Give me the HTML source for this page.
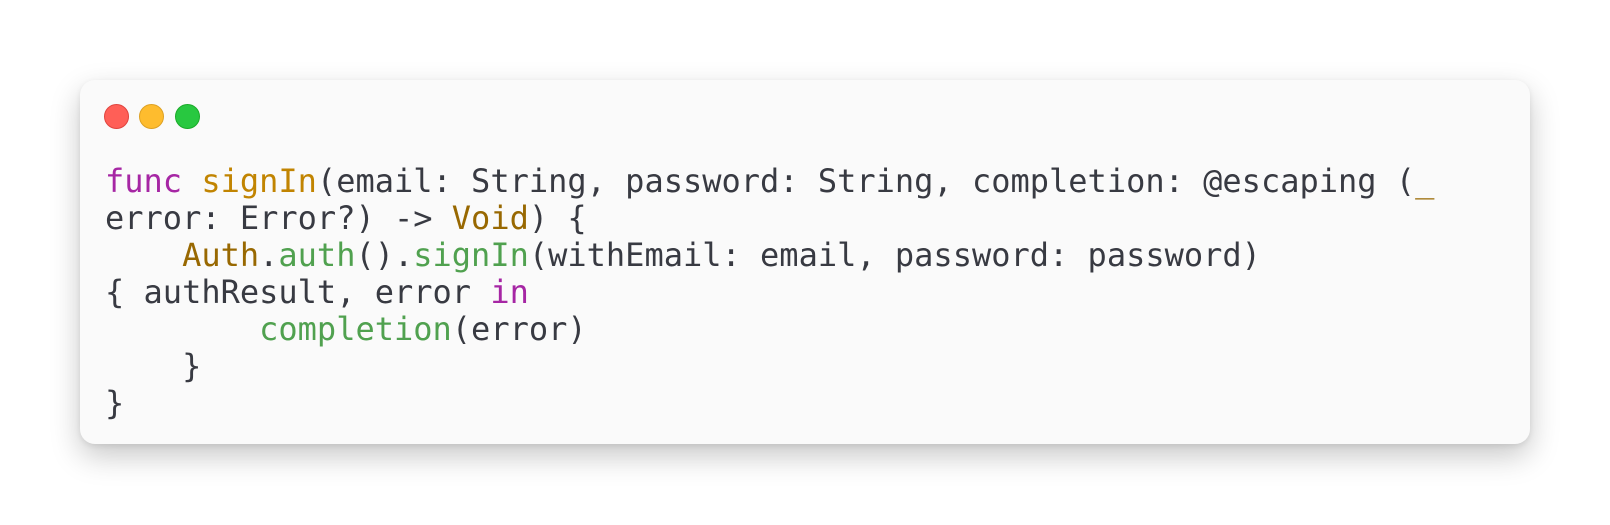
<!DOCTYPE html>
<html><head><meta charset="utf-8"><style>
html,body{margin:0;padding:0;background:#fff;width:1610px;height:525px;overflow:hidden}
.card{position:absolute;left:80px;top:80px;width:1450px;height:364px;background:#fafafa;border-radius:15px;box-shadow:0 12px 30px rgba(0,0,0,0.22),0 2px 6px rgba(0,0,0,0.08)}
.dot{position:absolute;top:104px;width:25px;height:25px;border-radius:50%;box-sizing:border-box}
pre{position:absolute;left:105px;top:163px;margin:0;font-family:"DejaVu Sans Mono","Liberation Mono",monospace;font-size:32px;line-height:37px;color:#383a42}
.k{color:#a626a4}.f{color:#c18401}.t{color:#986801}.g{color:#50a14f}
</style></head><body>
<div class="card"></div>
<div class="dot" style="left:104px;background:#ff5f57;border:0.5px solid #e0443e"></div>
<div class="dot" style="left:139px;background:#febc2e;border:0.5px solid #dea123"></div>
<div class="dot" style="left:175px;background:#28c840;border:0.5px solid #1aab29"></div>
<pre><span class="k">func</span> <span class="f">signIn</span>(email: String, password: String, completion: @escaping (<span class="t">_</span>
error: Error?) -&gt; <span class="t">Void</span>) {
    <span class="t">Auth</span>.<span class="g">auth</span>().<span class="g">signIn</span>(withEmail: email, password: password)
{ authResult, error <span class="k">in</span>
        <span class="g">completion</span>(error)
    }
}</pre>
</body></html>
